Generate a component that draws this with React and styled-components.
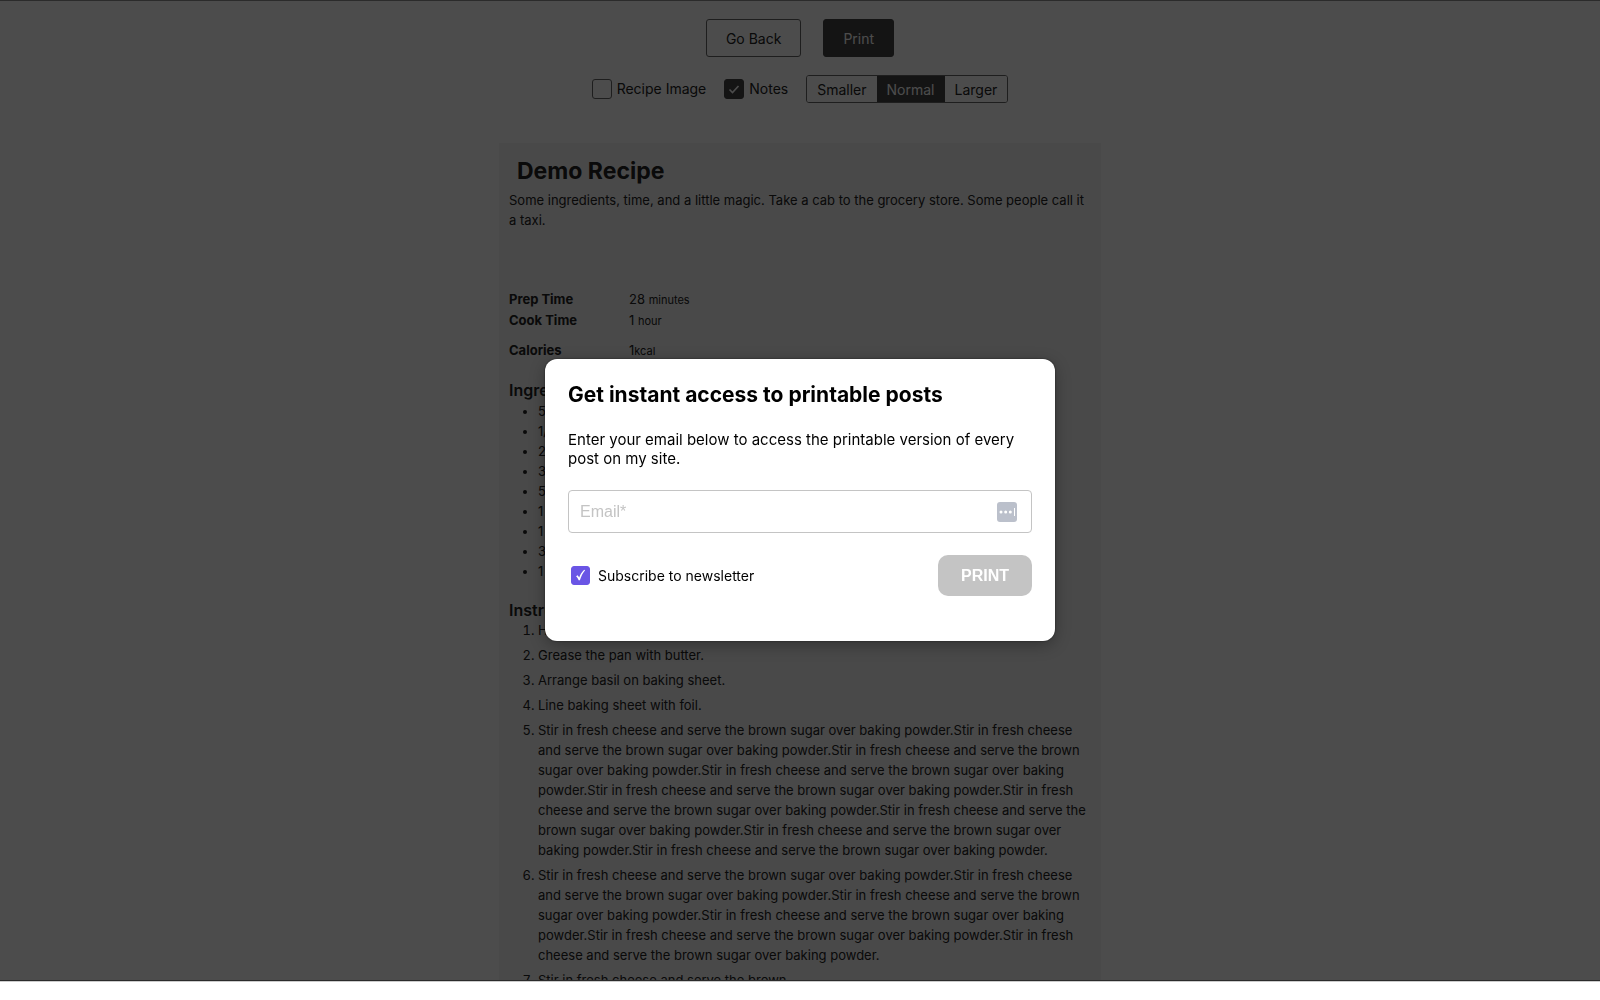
import React, { useState } from 'react'
import styled, { createGlobalStyle } from 'styled-components'

const GlobalStyle = createGlobalStyle`
    * {
        box-sizing: border-box;
    }

    body {
        margin: 0;
        background: #fff;
        color: #222;
        font-family: Inter, 'Liberation Sans', sans-serif;
    }

    button,
    input {
        font-family: inherit;
    }
`

const Screen = styled.div`
    height: 100vh;
    padding-bottom: 18px;
    overflow: hidden;
`

const Page = styled.div`
    position: relative;
    height: 100%;
    border-bottom: 1px solid #ccc;
    overflow: hidden;
`

const Shade = styled.div`
    position: absolute;
    inset: 0;
    background: rgba(0, 0, 0, 0.7);
    border-top: 1px solid #2b2b2b;
    border-bottom: 1px solid #2b2b2b;
`

const Toolbar = styled.header`
    display: flex;
    flex-direction: column;
    align-items: center;
    gap: 18px;
    padding-top: 19px;
`

const ToolbarRow = styled.div`
    display: flex;
    align-items: center;
    gap: ${(props) => props.$gap}px;
`

const ActionButton = styled.button`
    height: 38px;
    padding: 0 19px;
    border: 1px solid ${(props) => (props.$dark ? '#444' : '#666')};
    border-radius: 3px;
    background: ${(props) => (props.$dark ? '#444' : '#fff')};
    color: ${(props) => (props.$dark ? '#fff' : '#222')};
    font-size: 14px;
`

const Option = styled.label`
    display: flex;
    align-items: center;
    gap: 5px;
    font-size: 14px;
    line-height: 20px;
`

const CheckWrap = styled.span`
    position: relative;
    display: flex;

    svg {
        position: absolute;
        inset: 0;
        pointer-events: none;
    }
`

const OptionBox = styled.input`
    appearance: none;
    width: 20px;
    height: 20px;
    margin: 0;
    border: 1px solid #666;
    border-radius: 3px;

    &:checked {
        border-color: #444;
        background: #444;
    }
`

const SizeGroup = styled.div`
    display: flex;
    border: 1px solid #666;
    border-radius: 3px;
    overflow: hidden;
`

const SizeButton = styled.button`
    height: 26px;
    padding: 0 10px;
    border: 0;
    background: ${(props) => (props.$active ? '#444' : '#fff')};
    color: ${(props) => (props.$active ? '#fff' : '#222')};
    font-size: 14px;
`

const Sheet = styled.article`
    width: 100%;
    max-width: 602px;
    margin: 40px auto 0;
    padding: 12px 10px;
    background: #f5f5f5;
    font-size: 13px;
    line-height: 20px;
`

const RecipeTitle = styled.h1`
    margin: 0;
    padding-left: 8px;
    font-size: 23px;
    line-height: 32px;
`

const Summary = styled.p`
    margin: 3px 0 59px;
`

const Meta = styled.dl`
    display: grid;
    grid-template-columns: 120px 1fr;
    margin: 0 0 ${(props) => props.$space}px;

    dt {
        font-weight: 700;
    }

    dd {
        margin: 0;
    }

    small {
        font-size: 11px;
    }
`

const Heading = styled.h2`
    margin: 0;
    font-size: 16px;
    line-height: 20px;
    font-weight: 600;
`

const Ingredients = styled.ul`
    margin: 1px 0 19px;
    padding-left: 29px;
`

const Instructions = styled.ol`
    margin: 0;
    padding-left: 29px;

    li {
        margin-bottom: 5px;
    }
`

const Overlay = styled.div`
    position: fixed;
    inset: 0;
    display: flex;
    align-items: center;
    justify-content: center;
`

const Modal = styled.form`
    width: 100%;
    max-width: 510px;
    padding: 23px 23px 45px;
    border-radius: 12px;
    background: #fff;
    color: #000;
    box-shadow: 0 4px 16px rgba(0, 0, 0, 0.3), 0 0 2px rgba(0, 0, 0, 0.6);
`

const ModalTitle = styled.h2`
    margin: 0 0 22px;
    font-size: 21px;
    line-height: 26px;
`

const ModalText = styled.p`
    margin: 0 0 22px;
    font-size: 15px;
    line-height: 19px;
`

const Field = styled.div`
    display: flex;
    align-items: center;
    height: 43px;
    margin-bottom: 22px;
    padding: 0 14px 0 11px;
    border: 1px solid #c4c4c4;
    border-radius: 4px;
`

const EmailInput = styled.input`
    flex: 1;
    padding: 0;
    border: 0;
    outline: 0;
    background: none;
    font-family: 'Liberation Sans', Arial, sans-serif;
    font-size: 16px;

    &::placeholder {
        color: #c4c4c4;
    }
`

const ModalFooter = styled.div`
    display: flex;
    align-items: center;
    justify-content: space-between;
    padding-left: 3px;
`

const Subscribe = styled.label`
    display: flex;
    align-items: center;
    gap: 8px;
    font-size: 14px;
`

const SubscribeBox = styled.input`
    appearance: none;
    width: 19px;
    height: 19px;
    margin: 0;
    border: 1px solid #6a55e5;
    border-radius: 3px;

    &:checked {
        background: #6a55e5;
    }
`

const SubmitButton = styled.button`
    height: 41px;
    padding: 0 23px;
    border: 0;
    border-radius: 10px;
    background: #c4c4c4;
    color: #fff;
    font-family: 'Liberation Sans', Arial, sans-serif;
    font-size: 16px;
    font-weight: 700;
`

const STIR = 'Stir in fresh cheese and serve the brown sugar over baking powder.'

const steps = [
    'Heat the oven.',
    'Grease the pan with butter.',
    'Arrange basil on baking sheet.',
    'Line baking sheet with foil.',
    STIR.repeat(9),
    STIR.repeat(6),
    'Stir in fresh cheese and serve the brown',
]

const amounts = ['5', '1/2', '2', '3', '5', '1', '1', '3', '1']
const sizes = ['Smaller', 'Normal', 'Larger']

const App = () => {
    const [size, setSize] = useState('Normal')
    const [image, setImage] = useState(false)
    const [notes, setNotes] = useState(true)
    const [subscribe, setSubscribe] = useState(true)

    return (
        <Screen>
            <GlobalStyle />
            <Page>
                <Toolbar>
                    <ToolbarRow $gap={22}>
                        <ActionButton type="button">Go Back</ActionButton>
                        <ActionButton type="button" $dark>Print</ActionButton>
                    </ToolbarRow>
                    <ToolbarRow $gap={18}>
                        <Option>
                            <OptionBox type="checkbox" checked={image} onChange={() => setImage(!image)} />
                            Recipe Image
                        </Option>
                        <Option>
                            <CheckWrap>
                                <OptionBox type="checkbox" checked={notes} onChange={() => setNotes(!notes)} />
                                {notes && (
                                    <svg width="20" height="20" viewBox="0 0 20 20" fill="none" stroke="#fff" strokeWidth="1.6">
                                        <path d="M5.5 10.5l3 3 6-6.5" />
                                    </svg>
                                )}
                            </CheckWrap>
                            Notes
                        </Option>
                        <SizeGroup>
                            {sizes.map((name) => (
                                <SizeButton key={name} type="button" $active={name === size} onClick={() => setSize(name)}>
                                    {name}
                                </SizeButton>
                            ))}
                        </SizeGroup>
                    </ToolbarRow>
                </Toolbar>
                <Sheet>
                    <RecipeTitle>Demo Recipe</RecipeTitle>
                    <Summary>
                        Some ingredients, time, and a little magic. Take a cab to the grocery store. Some people call it a taxi.
                    </Summary>
                    <Meta $space={9}>
                        <dt>Prep Time</dt>
                        <dd>28 <small>minutes</small></dd>
                        <dt>Cook Time</dt>
                        <dd>1 <small>hour</small></dd>
                    </Meta>
                    <Meta $space={19}>
                        <dt>Calories</dt>
                        <dd>1<small>kcal</small></dd>
                    </Meta>
                    <Heading>Ingredients</Heading>
                    <Ingredients>
                        {amounts.map((amount, i) => (
                            <li key={i}>{amount}</li>
                        ))}
                    </Ingredients>
                    <Heading>Instructions</Heading>
                    <Instructions>
                        {steps.map((step, i) => (
                            <li key={i}>{step}</li>
                        ))}
                    </Instructions>
                </Sheet>
                <Shade />
            </Page>
            <Overlay>
                <Modal onSubmit={(e) => e.preventDefault()}>
                    <ModalTitle>Get instant access to printable posts</ModalTitle>
                    <ModalText>
                        Enter your email below to access the printable version of every post on my site.
                    </ModalText>
                    <Field>
                        <EmailInput type="email" placeholder="Email*" aria-label="Email" />
                        <svg width="20" height="20" viewBox="0 0 20 20" aria-hidden="true">
                            <rect width="20" height="20" rx="3" fill="#bbc0cb" />
                            <circle cx="4" cy="10" r="1.5" fill="#fff" />
                            <circle cx="8.7" cy="10" r="1.5" fill="#fff" />
                            <circle cx="13.3" cy="10" r="1.5" fill="#fff" />
                            <path d="M17.5 6v8" stroke="#fff" strokeWidth="1" />
                        </svg>
                    </Field>
                    <ModalFooter>
                        <Subscribe>
                            <CheckWrap>
                                <SubscribeBox
                                    type="checkbox"
                                    checked={subscribe}
                                    onChange={() => setSubscribe(!subscribe)}
                                />
                                {subscribe && (
                                    <svg width="19" height="19" viewBox="0 0 19 19" fill="#fff">
                                        <path d="M5 10.2l1.7-.9 1.5 2.2c1.1-3 2.7-5.6 5-7.7l.9.5C11.7 7.2 10.2 10.4 8.9 14.2H7.6C7 12.6 6.2 11.2 5 10.2z" />
                                    </svg>
                                )}
                            </CheckWrap>
                            Subscribe to newsletter
                        </Subscribe>
                        <SubmitButton type="submit">PRINT</SubmitButton>
                    </ModalFooter>
                </Modal>
            </Overlay>
        </Screen>
    )
}

export default App
